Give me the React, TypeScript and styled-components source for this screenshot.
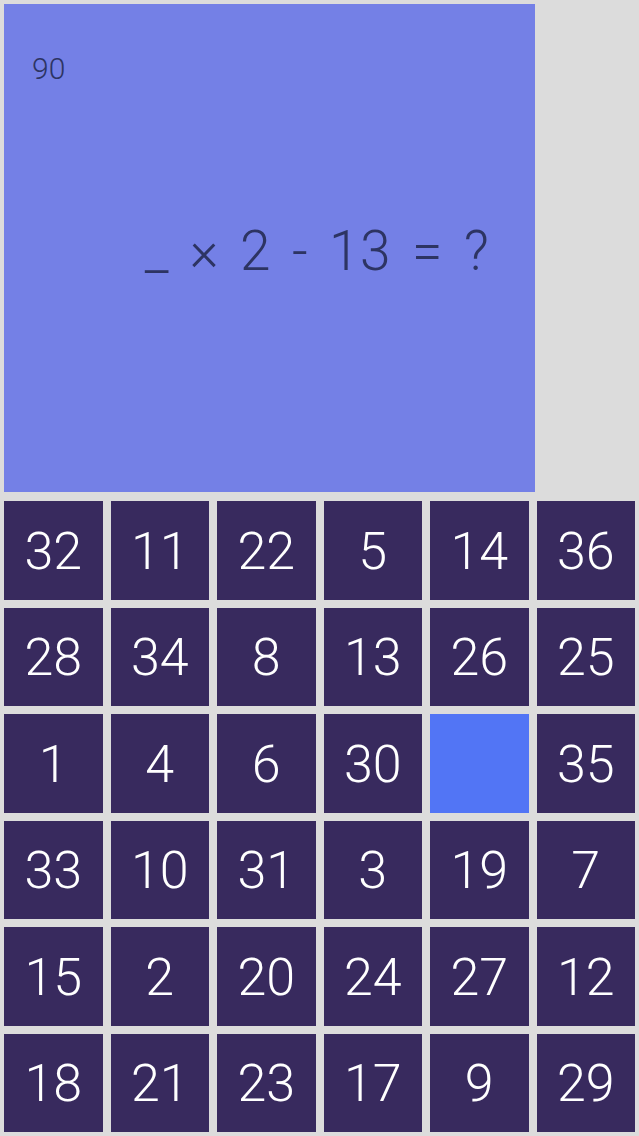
import styled, { createGlobalStyle } from 'styled-components';

const GlobalStyle = createGlobalStyle`
    html, body {
        margin: 0;
        padding: 0;
        background: #dcdcdc;
    }
    * {
        box-sizing: border-box;
    }
`;

const Screen = styled.div`
    width: 639px;
    height: 1136px;
    padding: 4px;
    display: flex;
    flex-direction: column;
    gap: 9px;
    background: #dcdcdc;
    font-family: Roboto, "Helvetica Neue", "Liberation Sans", sans-serif;
    font-weight: 300;
`;

const QuestionPanel = styled.div`
    width: 531px;
    height: 488px;
    background: #7480e6;
    color: #2d3463;
    display: grid;
    grid-template: 1fr / 1fr;
`;

const Timer = styled.div`
    grid-area: 1 / 1;
    align-self: start;
    justify-self: start;
    margin: 50px 0 0 28px;
    font-size: 30px;
    line-height: 1;
`;

const Equation = styled.div`
    grid-area: 1 / 1;
    display: flex;
    align-items: center;
    justify-content: center;
    padding: 7px 0 0 95px;
    font-size: 55px;
    line-height: 1;
    letter-spacing: 0.5px;
    word-spacing: 7px;
    white-space: pre;
`;

const Board = styled.div`
    display: grid;
    grid-template-columns: repeat(6, 1fr);
    gap: 8px;
`;

const Tile = styled.div<{ $active?: boolean }>`
    aspect-ratio: 1;
    background: ${p => (p.$active ? '#5275f5' : '#382a5e')};
    color: #ffffff;
    display: flex;
    align-items: center;
    justify-content: center;
    padding-top: 3px;
    font-size: 52px;
    line-height: 1;
`;

const numbers: (number | null)[] = [
    32, 11, 22, 5, 14, 36,
    28, 34, 8, 13, 26, 25,
    1, 4, 6, 30, null, 35,
    33, 10, 31, 3, 19, 7,
    15, 2, 20, 24, 27, 12,
    18, 21, 23, 17, 9, 29,
];

export default function App() {
    return (
        <>
            <GlobalStyle />
            <Screen>
                <QuestionPanel>
                    <Timer>90</Timer>
                    <Equation>_ × 2 - 13 = ?</Equation>
                </QuestionPanel>
                <Board>
                    {numbers.map((n, i) => (
                        <Tile key={i} $active={n === null}>
                            {n ?? ''}
                        </Tile>
                    ))}
                </Board>
            </Screen>
        </>
    );
}
